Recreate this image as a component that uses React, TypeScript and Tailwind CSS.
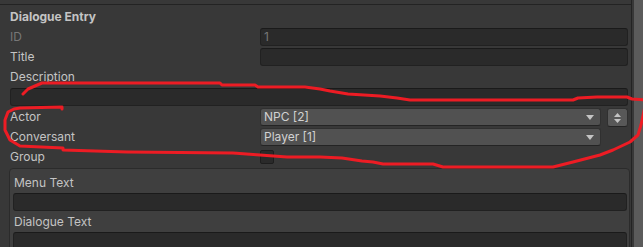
import React from 'react';

const font = { fontFamily: 'Inter, "Noto Sans", sans-serif' };

const Label: React.FC<{ text: string; dim?: boolean; className?: string }> = ({ text, dim, className }) => (
  <div className={`h-[18px] flex items-center text-[12px] leading-none ${dim ? 'text-[#777777]' : 'text-[#c4c4c4]'} ${className ?? ''}`}>
    {text}
  </div>
);

const TextField: React.FC<{ value?: string; dim?: boolean; className?: string }> = ({ value, dim, className }) => (
  <div
    className={`h-[18px] rounded-[3px] bg-[#2a2a2a] border border-[#212121] border-t-[#1a1a1a] flex items-center px-[3px] text-[12px] ${dim ? 'text-[#777777]' : 'text-[#c4c4c4]'} ${className ?? ''}`}
  >
    {value}
  </div>
);

const Popup: React.FC<{ value: string }> = ({ value }) => (
  <div className="w-[341px] h-[18px] rounded-[3px] bg-[#515151] border border-[#303030] border-b-[#242424] flex items-center justify-between pl-[3px] pr-[6px] text-[12px] text-[#d2d2d2]">
    <span>{value}</span>
    <svg width="8" height="5" viewBox="0 0 8 5">
      <path d="M0 0 H8 L4 5 Z" fill="#c4c4c4" />
    </svg>
  </div>
);

const Row: React.FC<{ label: string; dim?: boolean; children?: React.ReactNode }> = ({ label, dim, children }) => (
  <div className="flex h-[18px] mb-[2px]">
    <div className="w-[250px]">
      <Label text={label} dim={dim} />
    </div>
    <div className="flex-1 flex">{children}</div>
  </div>
);

export default function App() {
  return (
    <div className="relative w-[643px] h-[247px] overflow-hidden bg-[#383838] flex" style={font}>
      <div className="w-[632px] pt-[4px] border-r border-[#232323]">
        <div className="border-t border-[#232323] pt-[3px] pl-[10px] pr-[3px]">
          <div className="h-[18px] mb-[2px] flex items-center text-[12px] font-bold text-[#c4c4c4]">Dialogue Entry</div>
          <Row label="ID" dim>
            <TextField value="1" dim className="flex-1" />
          </Row>
          <Row label="Title">
            <TextField className="flex-1" />
          </Row>
          <Row label="Description" />
          <div className="mb-[2px]">
            <TextField />
          </div>
          <Row label="Actor">
            <Popup value="NPC [2]" />
            <div className="ml-[6px] w-[21px] h-[19px] rounded-[3px] bg-[#585858] border border-[#303030] border-b-[#242424] flex flex-col items-center justify-center gap-[2px]">
              <svg width="7" height="4" viewBox="0 0 7 4">
                <path d="M0 4 L3.5 0 L7 4 Z" fill="#c4c4c4" />
              </svg>
              <svg width="7" height="4" viewBox="0 0 7 4">
                <path d="M0 0 H7 L3.5 4 Z" fill="#c4c4c4" />
              </svg>
            </div>
          </Row>
          <Row label="Conversant">
            <Popup value="Player [1]" />
          </Row>
          <Row label="Group">
            <div className="mt-[2px] w-[14px] h-[14px] rounded-[2px] bg-[#2a2a2a] border border-[#1e1e1e]" />
          </Row>
        </div>
        <div className="ml-[9px] mr-[1px] rounded-[4px] border border-[#2b2b2b] bg-[#3f3f3f] pt-[5px] pl-[3px] pr-[2px] h-[100px]">
          <Label text="Menu Text" className="pl-[1px] mb-[1px]" />
          <TextField className="mb-[2px]" />
          <Label text="Dialogue Text" className="pl-[1px] mb-[1px]" />
          <TextField />
        </div>
      </div>
      <div className="w-[2px]" />
      <div className="flex-1 bg-[#5b5b5b]" />
      <svg className="absolute inset-0 pointer-events-none" width="643" height="247" viewBox="0 0 643 247">
        <polyline
          fill="none"
          stroke="#ed1c24"
          strokeWidth="3"
          strokeLinejoin="round"
          strokeLinecap="round"
          points="23,94 28,89 35,86 42,83 220,83 222,85 255,85 258,87 305,87 320,89 330,91 348,94 380,96 397,98 410,100 573,100 578,98 597,97 627,97 632,99 645,100"
        />
        <polyline
          fill="none"
          stroke="#ed1c24"
          strokeWidth="3"
          strokeLinejoin="round"
          strokeLinecap="round"
          points="645,106 641,125 638,135 630,142 613,150 600,155 573,162 553,167 443,167 433,164 383,164 373,162 362,161 342,158 320,157 287,157 233,153 127,152 63,150 63,148 20,146 10,140 5,130 5,120 8,112 14,109 20,108 62,107 62,109"
        />
      </svg>
    </div>
  );
}
